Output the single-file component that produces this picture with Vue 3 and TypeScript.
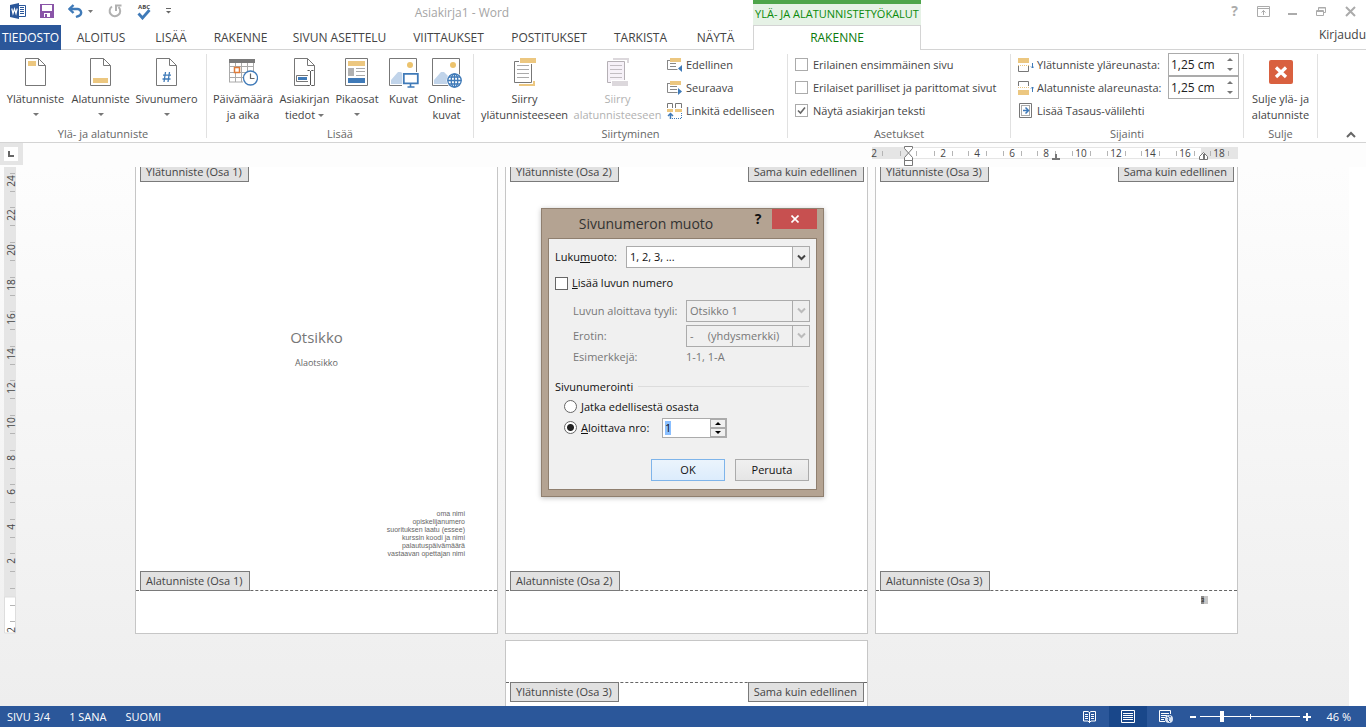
<script setup lang="ts">
import { ref } from 'vue'

const tabs = ['ALOITUS', 'LISÄÄ', 'RAKENNE', 'SIVUN ASETTELU', 'VIITTAUKSET', 'POSTITUKSET', 'TARKISTA', 'NÄYTÄ']

const CM = 173 / 10
const rulerNumbers = [2, 4, 6, 8, 10, 12, 14, 16, 18].map((n) => ({ n, x: Math.round(37 + n * CM) }))
const rulerTicks = [11, 29, 45, ...rulerNumbers.flatMap((r) => [r.x - 9, r.x + 9])]
const verticalNumbers = [24, 22, 20, 18, 16, 14, 12, 10, 8, 6, 4, 2].map((n) => ({ n, y: Math.round(430 - n * CM) }))
const verticalTicks = [...verticalNumbers.flatMap((r) => [r.y - 9, r.y + 9]), 421, 438, 454]

const coverLines = [
  'oma nimi',
  'opiskelijanumero',
  'suorituksen laatu (essee)',
  'kurssin koodi ja nimi',
  'palautuspäivämäärä',
  'vastaavan opettajan nimi',
]

const differentFirst = ref(false)
const differentOddEven = ref(false)
const showText = ref(true)
const headerDistance = ref('1,25 cm')
const footerDistance = ref('1,25 cm')
const includeChapter = ref(false)
const numbering = ref('start')
const startAt = ref('1')
const zoom = ref(20)
</script>

<template>
  <div class="app">
    <header class="top">
      <div class="titlebar">
        <div class="qat">
          <svg class="q-word" width="16" height="16" viewBox="0 0 16 16">
            <path d="M8.500 2.500h7v11h-7" fill="#fff" stroke="#2b579a" />
            <path d="M10 4.500h4M10 6.500h4M10 8.500h4M10 10.500h4" stroke="#2b579a" />
            <path d="M0 2l9-2v16l-9-2z" fill="#2b579a" />
            <path d="M1.800 5.500l1.200 5 1.500-4.500 1.500 4.500 1.200-5" fill="none" stroke="#fff" stroke-width="1.200" />
          </svg>
          <button class="q" aria-label="Tallenna">
            <svg width="14" height="14" viewBox="0 0 14 14">
              <path d="M0 0h14v14H0z" fill="#8a55a8" />
              <path d="M2 1h10v6H2zM4 9h6v4H7v-3H5v3H4z" fill="#fff" />
            </svg>
          </button>
          <button class="q" aria-label="Kumoa">
            <svg width="26" height="14" viewBox="0 0 26 14">
              <path d="M1.500 5h7.500a3.500 3.500 0 0 1 1 7.200l-2 .8" fill="none" stroke="#3f7ab8" stroke-width="2.400" />
              <path d="M5.500 1l-4 4 4 4" fill="none" stroke="#3f7ab8" stroke-width="2.400" />
              <path d="M20 6h5l-2.500 3z" fill="#777" />
            </svg>
          </button>
          <button class="q" aria-label="Tee uudelleen">
            <svg width="14" height="14" viewBox="0 0 14 14">
              <path d="M4 2.500A5.300 5.300 0 1 0 10.500 3" fill="none" stroke="#b1b1b1" stroke-width="2" />
              <path d="M8 7V1.500h5.500" fill="none" stroke="#b1b1b1" stroke-width="2" />
            </svg>
          </button>
          <button class="q" aria-label="Kieliasun tarkistus">
            <svg width="16" height="18" viewBox="0 0 16 18">
              <text x="8" y="7" text-anchor="middle" class="abc">ABC</text>
              <path d="M2.500 11.500l4 4.500 7-8" fill="none" stroke="#3f7ab8" stroke-width="2.800" />
            </svg>
          </button>
          <button class="q" aria-label="Mukauta">
            <svg width="6" height="6" viewBox="0 0 6 6">
              <path d="M0 .5h5" stroke="#666" /><path d="M0 3h5L2.500 5.500z" fill="#666" />
            </svg>
          </button>
        </div>
        <div class="doc-title">Asiakirja1 - Word</div>
      </div>
      <div class="context-title">YLÄ- JA ALATUNNISTETYÖKALUT</div>
      <div class="window-buttons">
        <button aria-label="Ohje"><b>?</b></button>
        <button aria-label="Valintanauhan asetukset">
          <svg width="13" height="11" viewBox="0 0 13 11"><path d="M.5.5h12v10H.5zM.5 2.500h12M6.500 9V4.500M4.500 6.500l2-2 2 2" fill="none" stroke="#ababab" /></svg>
        </button>
        <button aria-label="Pienennä">
          <svg width="10" height="11" viewBox="0 0 10 11"><path d="M0 8h9" stroke="#ababab" stroke-width="2" /></svg>
        </button>
        <button aria-label="Palauta">
          <svg width="11" height="11" viewBox="0 0 11 11"><path d="M.5 4.500h7v5h-7zM.5 5.500h7M2.500 4V1.500h7v5H8M2.500 2h7" fill="none" stroke="#ababab" /></svg>
        </button>
        <button aria-label="Sulje">
          <svg width="11" height="11" viewBox="0 0 11 11"><path d="M1 1l9 9M10 1l-9 9" stroke="#ababab" stroke-width="2" /></svg>
        </button>
      </div>
      <nav class="tabs">
        <button class="file">TIEDOSTO</button>
        <button v-for="t in tabs" :key="t">{{ t }}</button>
      </nav>
      <button class="context-tab">RAKENNE</button>
      <div class="signin"><a href="#">Kirjaudu</a></div>
    </header>

    <section class="ribbon">
      <div class="group">
        <div class="body g1">
          <button class="big">
            <svg width="22" height="28" viewBox="0 0 22 28"><path d="M.5.5h13l7 7v20H.5zM13.500.5v7h7" fill="#fff" stroke="#777" /><path d="M3 3h8v5H3z" fill="#ecc780" /></svg>
            <span>Ylätunniste</span><i class="caret"></i>
          </button>
          <button class="big">
            <svg width="22" height="28" viewBox="0 0 22 28"><path d="M.5.5h13l7 7v20H.5zM13.500.5v7h7" fill="#fff" stroke="#777" /><path d="M3 20h15v5H3z" fill="#ecc780" /></svg>
            <span>Alatunniste</span><i class="caret"></i>
          </button>
          <button class="big">
            <svg width="22" height="28" viewBox="0 0 22 28"><path d="M.5.5h13l7 7v20H.5zM13.500.5v7h7" fill="#fff" stroke="#777" /><path d="M9.500 14l-1.500 10M13.500 14L12 24M7 17.200h8M6.500 21h8" fill="none" stroke="#3f7ab8" stroke-width="1.300" /></svg>
            <span>Sivunumero</span><i class="caret"></i>
          </button>
        </div>
        <div class="name">Ylä- ja alatunniste</div>
      </div>

      <div class="group">
        <div class="body g2">
          <button class="big">
            <svg width="30" height="28" viewBox="0 0 30 28">
              <path d="M1.500 4v20M7.500 4v20M13.500 4v20M19.500 4v12M25.500 4v10M1 8.500h25M1 14.500h25M1 19.500h15M1 24h14" fill="none" stroke="#aaa" />
              <path d="M1 1h26v4H1z" fill="#7a7a7a" />
              <path d="M6.500 9.500h5v5h-5z" fill="#fff" stroke="#e07b39" stroke-width="1.500" />
              <circle cx="22.500" cy="20" r="7" fill="#fff" stroke="#3f7ab8" stroke-width="1.300" />
              <path d="M22.500 15.500v5h4" fill="none" stroke="#666" stroke-width="1.200" />
            </svg>
            <span>Päivämäärä</span><span>ja aika</span>
          </button>
          <button class="big">
            <svg width="22" height="28" viewBox="0 0 22 28">
              <path d="M.5.5h13l7 7v20H.5zM13.500.5v7h7" fill="#fff" stroke="#777" />
              <path d="M2.500 17.500h14v6h-14z" fill="#fff" stroke="#777" /><path d="M4 19h9v3H4z" fill="#3f7ab8" />
              <path d="M14 13h5v15h-5z" fill="#fff" /><path d="M13.500 12.500h2l1 1 1-1h2M16.500 13v14M13.500 27.500h2l1-1 1 1h2" fill="none" stroke="#555" />
            </svg>
            <span>Asiakirjan</span><span>tiedot <i class="caret inline"></i></span>
          </button>
          <button class="big">
            <svg width="24" height="28" viewBox="0 0 24 28">
              <path d="M.5.5h22v27H.5z" fill="#fff" stroke="#777" /><path d="M3 3h17v5H3z" fill="#ecc780" />
              <path d="M3 10h6v8H3z" fill="#b1b1b1" /><path d="M11 10.500h9M11 13.500h9M11 17.500h9" stroke="#aaa" /><path d="M3 20h17v5H3z" fill="#3f7ab8" />
            </svg>
            <span>Pikaosat</span><i class="caret"></i>
          </button>
          <button class="big">
            <svg width="30" height="30" viewBox="0 0 30 30">
              <path d="M.5.5h27v27H.5z" fill="#fff" stroke="#777" /><circle cx="21" cy="7" r="3" fill="#ecc36d" />
              <path d="M2 26V22l7-8h3l6 6v6z" fill="#c1d4ea" /><path d="M13 14h17v16H13z" fill="#fff" />
              <path d="M14.800 15.800h14v9.500h-14z" fill="#fff" stroke="#3f7ab8" stroke-width="1.800" /><path d="M21.500 26v2.500M18.500 29h7" stroke="#3f7ab8" stroke-width="1.600" />
            </svg>
            <span>Kuvat</span>
          </button>
          <button class="big">
            <svg width="30" height="30" viewBox="0 0 30 30">
              <path d="M.5.5h27v27H.5z" fill="#fff" stroke="#777" /><circle cx="21" cy="7" r="3" fill="#ecc36d" />
              <path d="M2 26V22l7-8h3l6 6v6z" fill="#c1d4ea" /><circle cx="22.500" cy="22.500" r="8" fill="#fff" />
              <g fill="none" stroke="#3f7ab8" stroke-width="1.300"><circle cx="22.500" cy="22.500" r="6.700" /><ellipse cx="22.500" cy="22.500" rx="3.300" ry="6.700" /><path d="M15.500 22.500h14M22.500 16v13M17 19h11M17 26h11" /></g>
            </svg>
            <span>Online-</span><span>kuvat</span>
          </button>
        </div>
        <div class="name">Lisää</div>
      </div>

      <div class="group">
        <div class="body g3">
          <button class="big">
            <svg width="22" height="28" viewBox="0 0 22 28">
              <path d="M.5 3.500h17v21H.5z" fill="#fff" stroke="#777" /><path d="M3 7.500h12M3 11.500h12M3 15.500h12M3 19.500h12" stroke="#aaa" />
              <path d="M5 -1h17v7H5z" fill="#fff" /><path d="M6 0h16v5H6z" fill="#ecc780" /><path d="M5 26v2h16v-5h-2v3z" fill="#ecc780" />
            </svg>
            <span>Siirry</span><span>ylätunnisteeseen</span>
          </button>
          <button class="big" disabled>
            <svg width="22" height="28" viewBox="0 0 22 28">
              <path d="M6 0h16v5h-2V2H6z" fill="#dcd8dc" /><path d="M.5 3.500h17v21H.5z" fill="#f6f1f8" stroke="#b5b0b5" /><path d="M3 7.500h12M3 11.500h12M3 15.500h12M3 19.500h12" stroke="#c2bdc2" />
              <path d="M4 22h18v6H4z" fill="#fff" /><path d="M5 23h16v5H5z" fill="#dcd8dc" />
            </svg>
            <span>Siirry</span><span>alatunnisteeseen</span>
          </button>
          <div class="rows">
            <button class="small">
              <svg width="16" height="16" viewBox="0 0 16 16"><path d="M.5 3v9.500h10M.5 3.500H3M3 6.500h6M3 9.500h6" fill="none" stroke="#888" /><path d="M3 1h11v4H3z" fill="#ecc780" /><path d="M15 8v7l-4-3.500z" fill="#3f7ab8" /></svg>
              Edellinen
            </button>
            <button class="small">
              <svg width="16" height="16" viewBox="0 0 16 16"><path d="M.5 3v9.500h10M.5 3.500H3M3 6.500h7M3 9.500h7" fill="none" stroke="#888" /><path d="M3 1h11v4H3z" fill="#ecc780" /><path d="M11 8v7l4-3.500z" fill="#3f7ab8" /></svg>
              Seuraava
            </button>
            <button class="small">
              <svg width="16" height="16" viewBox="0 0 16 16"><path d="M.5 5V.5h5V5M8.500 5V.5h6V5" fill="none" stroke="#777" /><path d="M0 6h6v3H0zM8 6h7v3H8z" fill="#ecc780" /><path d="M3.500 16v-5M1 13l2.500-2.500L6 13" fill="none" stroke="#3f7ab8" stroke-width="1.500" /><path d="M5 15.500h9.500V10" fill="none" stroke="#3f7ab8" stroke-dasharray="1 1" /></svg>
              Linkitä edelliseen
            </button>
          </div>
        </div>
        <div class="name">Siirtyminen</div>
      </div>

      <div class="group">
        <div class="body rows g4">
          <label class="check"><input v-model="differentFirst" type="checkbox" />Erilainen ensimmäinen sivu</label>
          <label class="check"><input v-model="differentOddEven" type="checkbox" />Erilaiset parilliset ja parittomat sivut</label>
          <label class="check"><input v-model="showText" type="checkbox" />Näytä asiakirjan teksti</label>
        </div>
        <div class="name">Asetukset</div>
      </div>

      <div class="group">
        <div class="body rows g5">
          <div class="field">
            <svg width="16" height="16" viewBox="0 0 16 16"><path d="M.5 9v5.500h10V9" fill="none" stroke="#777" /><path d="M0 1h11v5H0z" fill="#ecc780" /><path d="M0 8.500h11" stroke="#ecc780" stroke-dasharray="1 1" /><path d="M14.500 6v5M13 9.500l1.500 1.500L16 9.500" fill="none" stroke="#3f7ab8" /></svg>
            <label for="hd">Ylätunniste yläreunasta:</label>
            <span class="spin"><input id="hd" v-model="headerDistance" type="text" /><i class="up"></i><i class="down"></i></span>
          </div>
          <div class="field">
            <svg width="16" height="16" viewBox="0 0 16 16"><path d="M.5 6V1.500h10V6" fill="none" stroke="#777" /><path d="M0 10h11v5H0z" fill="#ecc780" /><path d="M0 7.500h11" stroke="#ecc780" stroke-dasharray="1 1" /><path d="M14.500 12V7M13 8.500L14.500 7 16 8.500" fill="none" stroke="#3f7ab8" /></svg>
            <label for="fd">Alatunniste alareunasta:</label>
            <span class="spin"><input id="fd" v-model="footerDistance" type="text" /><i class="up"></i><i class="down"></i></span>
          </div>
          <button class="small">
            <svg width="16" height="16" viewBox="0 0 16 16"><path d="M1.500.5h12v14h-12z" fill="#fff" stroke="#777" /><path d="M3.500 3v10M11.500 3v10M3 2.500h9M3 12.500h9" stroke="#aaa" /><path d="M5 7.500h5M7.500 4.500l3 3-3 3" fill="none" stroke="#3f7ab8" stroke-width="1.500" /></svg>
            Lisää Tasaus-välilehti
          </button>
        </div>
        <div class="name">Sijainti</div>
      </div>

      <div class="group">
        <div class="body g6">
          <button class="big">
            <svg width="24" height="28" viewBox="0 0 24 28"><rect y="2" width="24" height="24" rx="2" fill="#d9603f" /><path d="M7 9.500l10 9.500M17 9.500l-10 9.500" stroke="#fff" stroke-width="3.200" /></svg>
            <span>Sulje ylä- ja</span><span>alatunniste</span>
          </button>
        </div>
        <div class="name">Sulje</div>
      </div>

      <div class="fold">
        <button aria-label="Tiivistä valintanauha">
          <svg width="10" height="7" viewBox="0 0 10 7"><path d="M1 6l4-4 4 4" fill="none" stroke="#666" stroke-width="2" /></svg>
        </button>
      </div>
    </section>

    <main class="workspace">
      <div class="corner"><span><svg width="6" height="6" viewBox="0 0 6 6"><path d="M1 0v5h5" fill="none" stroke="#666" stroke-width="2" /></svg></span></div>
      <div class="ruler-row">
        <svg class="ruler" width="368" height="20" viewBox="0 0 368 20">
          <path d="M1 1h366v12H1z" fill="#e5e5e5" /><path d="M37 2h293v10H37z" fill="#fff" />
          <path v-for="x in rulerTicks" :key="x" :d="`M${x}.5 5v5`" stroke="#b5b5b5" />
          <text x="3" y="11">2</text>
          <text v-for="r in rulerNumbers" :key="r.n" :x="r.x" y="11">{{ r.n }}</text>
          <path d="M33.500.5h8v2l-4 4.500 4 4.500v3h-8v-3l4-4.500-4-4.500zM33.500 14.500h8v5h-8z" fill="#fff" stroke="#777" />
          <path d="M181 12h8v2h-8zM184 8h2v4h-2z" fill="#777" />
          <path d="M328.500 13.500v-3l4-4 4 4v3z" fill="#fff" stroke="#777" /><path d="M332 8h2v6h-2z" fill="#777" />
        </svg>
      </div>
      <div class="side">
        <svg class="vruler" width="16" height="467" viewBox="0 0 16 467">
          <path d="M0 0h12v466H0z" fill="#e5e5e5" /><path d="M.5 430h11v36H.5z" fill="#fff" stroke="#ddd" />
          <path v-for="y in verticalTicks" :key="y" :d="`M6 ${y}.5h5`" stroke="#b5b5b5" />
          <text v-for="r in verticalNumbers" :key="r.n" :transform="`translate(11 ${r.y - 1}) rotate(-90)`">{{ r.n }}</text>
          <text transform="translate(11 463) rotate(-90)">2</text>
        </svg>
      </div>
      <div class="canvas">
        <article v-for="n in 3" :key="n" class="page">
          <div class="tagrow head">
            <span class="tag">Ylätunniste (Osa {{ n }})</span>
            <span v-if="n > 1" class="tag">Sama kuin edellinen</span>
          </div>
          <div class="content">
            <template v-if="n === 1">
              <h1>Otsikko</h1>
              <h2>Alaotsikko</h2>
              <p><span v-for="l in coverLines" :key="l">{{ l }}</span></p>
            </template>
          </div>
          <div class="tagrow foot"><span class="tag">Alatunniste (Osa {{ n }})</span></div>
          <div class="margin"><span v-if="n === 3" class="pageno">3</span></div>
        </article>
        <article class="page next">
          <div class="margin"></div>
          <div class="tagrow below">
            <span class="tag">Ylätunniste (Osa 3)</span>
            <span class="tag">Sama kuin edellinen</span>
          </div>
        </article>
      </div>
      <div class="gutter"></div>
    </main>

    <footer class="status">
      <span>SIVU 3/4</span><span>1 SANA</span><span>SUOMI</span>
      <div class="views">
        <button aria-label="Lukutila">
          <svg width="14" height="14" viewBox="0 0 14 14"><path d="M.5 1.500h4.500l1.500 1 1.500-1h4.500v9.500H8l-1.500 1.500L5 11H.5zM6.500 2v11M2 4.500h3M2 6.500h3M2 8.500h3M8 4.500h3M8 6.500h3M8 8.500h3" fill="none" stroke="#fff" /></svg>
        </button>
        <button class="on" aria-label="Tulostusasettelu">
          <svg width="14" height="14" viewBox="0 0 14 14"><path d="M.5.5h13v12H.5zM2 3.500h10M2 5.500h10M2 7.500h10M2 9.500h10" fill="none" stroke="#fff" /></svg>
        </button>
        <button aria-label="Verkkoasettelu">
          <svg width="14" height="14" viewBox="0 0 14 14"><path d="M11.500 4V.5H.5v11H6M2 3.500h8M2 5.500h6M2 7.500h4M2 9.500h3" fill="none" stroke="#fff" /><circle cx="10" cy="9" r="4" fill="#dbe5f3" /><path d="M8 7l2 1-1 2 2 2M10 6l2 1" fill="none" stroke="#2b579a" /></svg>
        </button>
      </div>
      <button class="zoom-btn" aria-label="Loitonna"><svg width="8" height="8" viewBox="0 0 8 8"><path d="M1 4h6" stroke="#fff" stroke-width="2" /></svg></button>
      <input v-model="zoom" class="slider" type="range" min="0" max="100" aria-label="Zoomaus" />
      <button class="zoom-btn" aria-label="Lähennä"><svg width="8" height="8" viewBox="0 0 8 8"><path d="M0 4h8M4 0v8" stroke="#fff" stroke-width="2" /></svg></button>
      <span class="percent">46 %</span>
    </footer>

    <div class="dialog" role="dialog" aria-labelledby="dlg-title">
      <div class="dlg-bar">
        <h3 id="dlg-title">Sivunumeron muoto</h3>
        <button class="dlg-help" aria-label="Ohje">?</button>
        <button class="dlg-close" aria-label="Sulje">
          <svg width="8" height="8" viewBox="0 0 8 8"><path d="M.5.5l7 7M7.500.5l-7 7" stroke="#fff" stroke-width="1.600" /></svg>
        </button>
      </div>
      <form class="dlg-body" @submit.prevent>
        <div class="line first">
          <label for="fmt">Luku<u>m</u>uoto:</label>
          <span class="combo">
            <select id="fmt"><option>1, 2, 3, ...</option></select>
            <i><svg width="9" height="7" viewBox="0 0 9 7"><path d="M1 1.500l3.500 3.500L8 1.500" fill="none" stroke="#444" stroke-width="2" /></svg></i>
          </span>
        </div>
        <label class="line dcheck"><input v-model="includeChapter" type="checkbox" /><span><u>L</u>isää luvun numero</span></label>
        <div class="line sub">
          <label for="sty">Luvun aloittava tyyli:</label>
          <span class="combo">
            <select id="sty" disabled><option>Otsikko 1</option></select>
            <i><svg width="9" height="7" viewBox="0 0 9 7"><path d="M1 1.500l3.500 3.500L8 1.500" fill="none" stroke="#bbb" stroke-width="2" /></svg></i>
          </span>
        </div>
        <div class="line sub">
          <label for="sep">Erotin:</label>
          <span class="combo">
            <select id="sep" disabled><option>-&nbsp;&nbsp;&nbsp;&nbsp; (yhdysmerkki)</option></select>
            <i><svg width="9" height="7" viewBox="0 0 9 7"><path d="M1 1.500l3.500 3.500L8 1.500" fill="none" stroke="#bbb" stroke-width="2" /></svg></i>
          </span>
        </div>
        <div class="line sub short"><span>Esimerkkejä:</span><span>1-1, 1-A</span></div>
        <fieldset>
          <legend>Sivunumerointi</legend>
          <label class="radio"><input v-model="numbering" type="radio" value="continue" /><span><u>J</u>atka edellisestä osasta</span></label>
          <div class="radio">
            <input id="start" v-model="numbering" type="radio" value="start" />
            <label for="start"><u>A</u>loittava nro:</label>
            <span class="dspin">
              <span class="selbox"><input v-model="startAt" type="text" aria-label="Aloittava nro" /></span>
              <span class="updown"><button type="button" aria-label="Lisää"><i class="up"></i></button><button type="button" aria-label="Vähennä"><i class="down"></i></button></span>
            </span>
          </div>
        </fieldset>
        <div class="actions">
          <button class="ok" type="submit">OK</button>
          <button type="button">Peruuta</button>
        </div>
      </form>
    </div>
  </div>
</template>

<style>
body {
  margin: 0;
}
</style>

<style scoped>
.app {
  position: relative;
  display: flex;
  flex-direction: column;
  height: 100vh;
  overflow: hidden;
  background: #fff;
  color: #444;
  font: 11px/16px "Open Sans", "Noto Sans", sans-serif;
}
* {
  box-sizing: border-box;
}
button,
input,
select {
  font: inherit;
  color: inherit;
  margin: 0;
  padding: 0;
  border: 0;
  background: none;
  border-radius: 0;
}
svg {
  display: block;
  flex: none;
}
a {
  color: inherit;
  text-decoration: none;
}
i.caret,
i.up,
i.down {
  display: block;
  border: 3px solid transparent;
  border-bottom-width: 0;
  border-top-color: #777;
}
i.up {
  border-top-width: 0;
  border-bottom: 3px solid #777;
}

/* title bar and tabs */
.top {
  display: grid;
  grid-template: 25px 25px / 753px 168px 1fr;
  font-size: 12px;
}
.titlebar {
  display: flex;
}
.qat {
  display: flex;
  align-items: center;
  width: 171px;
  height: 22px;
  padding-left: 10px;
  gap: 14px;
}
.abc {
  font-size: 6px;
  font-weight: 700;
  fill: #444;
}
.doc-title {
  flex: 1;
  text-align: center;
  line-height: 26px;
  color: #a5a5a5;
}
.context-title {
  border-top: 4px solid #4ea54a;
  background: #e6f2e6;
  color: #0a8a0a;
  text-align: center;
  line-height: 19px;
  font-size: 11px;
  white-space: nowrap;
}
.window-buttons {
  display: flex;
  justify-content: flex-end;
  height: 22px;
  padding-right: 1px;
}
.window-buttons button {
  display: grid;
  place-items: center;
  width: 29px;
  color: #ababab;
  font-size: 14px;
}
.tabs {
  display: grid;
  grid-template-columns: 61px 80px 60px 79px 119px 99px 102px 81px 69px;
  border-bottom: 1px solid #d4d4d4;
}
.tabs .file {
  background: #2b579a;
  color: #fff;
  height: 25px;
}
.tabs button {
  white-space: nowrap;
}
.context-tab {
  border: 1px solid #d4d4d4;
  border-bottom: 0;
  color: #0a7a0a;
}
.signin {
  border-bottom: 1px solid #d4d4d4;
  text-align: right;
  line-height: 20px;
}

/* ribbon */
.ribbon {
  display: grid;
  grid-template-columns: 207px 267px 314px 223px 233px 74px 1fr;
  height: 93px;
  flex: none;
  border-bottom: 1px solid #d4d4d4;
}
.group {
  display: flex;
  flex-direction: column;
  margin: 4px 0;
  border-right: 1px solid #e1e1e1;
}
.body {
  flex: 1;
}
.name {
  text-align: center;
  line-height: 16px;
  margin-bottom: -4px;
  height: 16px;
  color: #666;
}
.g1,
.g2,
.g3 {
  display: grid;
}
.g1 {
  grid-template-columns: 65px 65px 67px;
  padding-left: 3px;
}
.g2 {
  grid-template-columns: 68px 55px 50px 43px 43px;
  padding-left: 2px;
}
.g3 {
  grid-template-columns: 93px 93px 1fr;
  padding-left: 4px;
}
.g6 {
  display: grid;
}
.big {
  display: flex;
  flex-direction: column;
  align-items: center;
  padding-top: 4px;
  white-space: nowrap;
}
.big svg {
  margin-bottom: 5px;
}
.big svg[height="30"] {
  margin-bottom: 3px;
}
.big > .caret {
  margin-top: 6px;
}
.caret.inline {
  display: inline-block;
  vertical-align: 2px;
}
.big:disabled {
  color: #b1b1b1;
}
.rows {
  display: grid;
  grid-auto-rows: 23px;
  align-content: start;
  margin-top: -1px;
}
.g3 .rows {
  padding-left: 3px;
}
.small,
.check,
.field {
  display: flex;
  align-items: center;
  gap: 3px;
  white-space: nowrap;
}
.g4 {
  padding-left: 7px;
}
.check {
  gap: 5px;
}
.check input {
  appearance: none;
  width: 13px;
  height: 13px;
  border: 1px solid #ababab;
  background: #fff;
}
.check input:checked {
  background: url("data:image/svg+xml,%3Csvg xmlns='http://www.w3.org/2000/svg' viewBox='0 0 11 11'%3E%3Cpath d='M2 5.500l2.500 2.500L9 2.500' fill='none' stroke='%23666' stroke-width='1.600'/%3E%3C/svg%3E") center / 11px no-repeat;
}
.g5 {
  padding-left: 7px;
}
.spin {
  display: grid;
  grid-template: 1fr 1fr / 1fr 16px;
  width: 71px;
  height: 23px;
  margin: 0 4px 0 auto;
  border: 1px solid #ababab;
  place-items: center;
  color: #222;
  font-size: 12px;
}
.spin input {
  grid-row: 1 / 3;
  width: 100%;
  min-width: 0;
  padding-left: 2px;
}
.fold {
  display: flex;
  justify-content: flex-end;
  align-items: flex-end;
  padding: 0 10px 4px 0;
}

/* document area */
.workspace {
  flex: 1;
  min-height: 0;
  display: grid;
  grid-template: 24px 1fr / 24px 1fr 17px;
  background: linear-gradient(#fdfdfd 24px, #eeeeee);
}
.corner {
  width: 23px;
  height: 22px;
  background: #e5e5e5;
  padding: 4px;
}
.corner span {
  display: grid;
  place-items: center;
  width: 14px;
  height: 14px;
  background: #fff;
}
.ruler-row {
  grid-column: 2 / 4;
  display: flex;
  justify-content: center;
  padding: 3px 0 0 720px;
  background: #fdfdfd;
}
.ruler text,
.vruler text {
  font-size: 10px;
  fill: #444;
  text-anchor: middle;
}
.vruler {
  margin-left: 4px;
}
.side,
.canvas,
.gutter {
  min-width: 0;
  min-height: 0;
}
.canvas {
  display: grid;
  grid-template-columns: repeat(3, 363px);
  grid-template-rows: 467px 1fr;
  gap: 6px 7px;
  justify-content: center;
  overflow: hidden;
}
.gutter {
  background: #fff;
}
.page {
  display: flex;
  flex-direction: column;
  min-height: 0;
  background: #fff;
  border: solid #c6c6c6;
  border-width: 0 1px 1px;
}
.tagrow {
  display: flex;
  justify-content: space-between;
  padding: 0 3px 0 4px;
}
.head {
  margin-top: -5px;
}
.tag {
  height: 20px;
  padding: 0 6px 0 5px;
  border: 1px solid #7a7a7a;
  background: #e1e1e1;
  line-height: 18px;
  white-space: nowrap;
}
.foot {
  height: 20px;
  border-bottom: 1px dashed #666;
}
.content {
  flex: 1;
  display: flex;
  flex-direction: column;
  align-items: center;
  color: #666;
}
h1,
h2,
h3,
p {
  margin: 0;
  font-weight: 400;
}
h1 {
  margin-top: 144px;
  font-size: 15px;
  line-height: 22px;
  color: #777;
}
h2 {
  margin-top: 8px;
  font-size: 9px;
  line-height: 14px;
}
.content p {
  display: grid;
  width: 100%;
  margin: auto 0 13px;
  padding-right: 32px;
  text-align: right;
  font: 7px/8px "Liberation Sans", Arial, sans-serif;
}
.margin {
  height: 42px;
}
.next .margin {
  height: 41px;
}
.pageno {
  display: block;
  width: 7px;
  height: 8px;
  margin: 5px 29px 0 auto;
  background: linear-gradient(90deg, #8a8a8a 3px, #c6c6c6 3px);
  color: #222;
  font: 6px/8px "Liberation Sans", Arial, sans-serif;
}
.next {
  grid-column: 2;
  border-width: 1px 1px 0;
}
.below {
  border-top: 1px dashed #666;
}
.below .tag {
  margin-top: -1px;
}

/* status bar */
.status {
  display: flex;
  align-items: center;
  height: 21px;
  flex: none;
  padding: 0 15px 0 7px;
  gap: 19px;
  background: #2b579a;
  color: #fff;
}
.views {
  display: flex;
  align-self: stretch;
  margin-left: auto;
  margin-right: -15px;
}
.views button {
  display: grid;
  place-items: center;
  width: 38px;
}
.views .on {
  background: #19478a;
}
.zoom-btn {
  width: 8px;
  margin-right: -16px;
}
.slider {
  appearance: none;
  width: 100px;
  height: 13px;
  background: linear-gradient(#fff, #fff) center / 100% 1px no-repeat, linear-gradient(#fff, #fff) center / 1px 5px no-repeat;
}
.slider::-webkit-slider-thumb {
  appearance: none;
  width: 4px;
  height: 11px;
  background: #fff;
}
.slider + .zoom-btn {
  margin: 0 -4px 0 -16px;
}
.percent {
  white-space: nowrap;
}

/* dialog */
.dialog {
  position: absolute;
  left: calc(50% - 142px);
  top: 208px;
  width: 283px;
  padding: 0 6px 6px;
  border: 1px solid #8f7f6f;
  background: #b4a392;
  box-shadow: 0 1px 5px rgba(0, 0, 0, 0.25);
  color: #111;
}
.dlg-bar {
  display: flex;
  align-items: flex-start;
  height: 29px;
}
.dlg-bar h3 {
  flex: 1;
  text-align: center;
  font-size: 14px;
  line-height: 30px;
  color: #333;
}
.dlg-help {
  width: 28px;
  line-height: 20px;
  font-size: 14px;
  font-weight: 700;
}
.dlg-close {
  display: grid;
  place-items: center;
  width: 45px;
  height: 20px;
  background: #c75050;
}
.dlg-body {
  border: 1px solid #8f7f6f;
  background: #f0f0f0;
  padding: 7px 6px 8px;
}
.line {
  display: flex;
  align-items: center;
  justify-content: space-between;
  height: 25px;
  white-space: nowrap;
}
.line.first {
  height: 22px;
}
.combo {
  position: relative;
  width: 124px;
  height: 22px;
}
.first .combo {
  width: 184px;
}
.combo select {
  appearance: none;
  width: 100%;
  height: 100%;
  padding-left: 3px;
  border: 1px solid #ababab;
  background: #fff;
}
.combo select:disabled {
  background: #f0f0f0;
  color: #777;
  opacity: 1;
}
.combo i {
  position: absolute;
  right: 0;
  top: 0;
  display: grid;
  place-items: center;
  width: 18px;
  height: 22px;
  border: 1px solid #ababab;
  background: #eee;
  pointer-events: none;
}
.line.dcheck {
  justify-content: flex-start;
  gap: 4px;
  height: 30px;
}
.dcheck input {
  appearance: none;
  width: 13px;
  height: 13px;
  border: 1px solid #666;
  background: #fff;
}
.line.sub {
  padding-left: 18px;
  color: #777;
}
.line.short {
  display: grid;
  grid-template-columns: 1fr 124px;
  height: 18px;
}
fieldset {
  margin: 11px 1px 0 0;
  padding: 0;
  border: 0;
}
legend {
  display: flex;
  align-items: center;
  gap: 5px;
  width: 100%;
  padding: 0;
  line-height: 19px;
}
legend::after {
  content: "";
  flex: 1;
  border-top: 1px solid #dcdcdc;
}
.radio {
  display: flex;
  align-items: center;
  height: 21px;
  padding-left: 9px;
  gap: 4px;
}
.radio input[type="radio"] {
  appearance: none;
  width: 13px;
  height: 13px;
  border: 1px solid #666;
  border-radius: 50%;
  background: #fff;
}
.radio input[type="radio"]:checked {
  background: radial-gradient(circle, #222 3px, #fff 4px);
}
.dspin {
  display: flex;
  width: 65px;
  height: 20px;
  margin: 0 82px 0 auto;
  border: 1px solid #ababab;
  background: #fff;
}
.selbox {
  flex: 1;
  padding: 2px;
}
.selbox input {
  display: block;
  width: 6px;
  height: 14px;
  background: #8abfff;
}
.updown {
  display: grid;
  width: 16px;
}
.updown button {
  display: grid;
  place-items: center;
  border: 1px solid #ababab;
  background: #f0f0f0;
}
.updown .up {
  border-bottom-color: #000;
}
.updown .down {
  border-top-color: #000;
}
.actions {
  display: flex;
  justify-content: flex-end;
  gap: 10px;
  margin: 21px 1px 0 0;
}
.actions button {
  width: 74px;
  height: 22px;
  border: 1px solid #ababab;
  background: linear-gradient(#f0f0f0, #e5e5e5);
}
.actions .ok {
  border-color: #7eb4ea;
  background: linear-gradient(#ebf4fc, #dcecfc);
}
</style>
